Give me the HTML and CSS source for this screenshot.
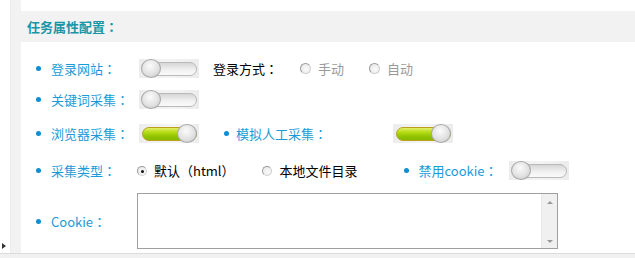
FILE: index.html
```html
<!DOCTYPE html>
<html>
<head>
<meta charset="utf-8">
<link rel="stylesheet" href="styles.css">
</head>
<body>
<div class="page">
  <div class="gutter"><span class="arrow"></span></div>
  <div class="frame">
    <div class="content">
      <div class="header">任务属性配置：</div>

      <div class="row row-1">
        <span class="dot"></span><span class="label">登录网站：</span>
        <span class="toggle"><span class="track"></span><span class="knob"></span></span>
        <span class="plain">登录方式：</span>
        <span class="radio-item radio-login"><span class="radio"></span><span class="muted">手动</span></span>
        <span class="radio-item radio-login2"><span class="radio"></span><span class="muted">自动</span></span>
      </div>

      <div class="row row-2">
        <span class="dot"></span><span class="label">关键词采集：</span>
        <span class="toggle"><span class="track"></span><span class="knob"></span></span>
      </div>

      <div class="row row-3">
        <span class="dot"></span><span class="label">浏览器采集：</span>
        <span class="toggle on"><span class="track"></span><span class="knob"></span></span>
        <span class="dot dot-mid"></span><span class="label label-wide">模拟人工采集：</span>
        <span class="toggle on"><span class="track"></span><span class="knob"></span></span>
      </div>

      <div class="row row-4">
        <span class="dot"></span><span class="label">采集类型：</span>
        <span class="radio-item radio-first"><span class="radio checked"></span><span class="plain-text">默认（html）</span></span>
        <span class="radio-item radio-second"><span class="radio"></span><span class="plain-text">本地文件目录</span></span>
        <span class="dot dot-far"></span><span class="label label-cookie">禁用cookie：</span>
        <span class="toggle"><span class="track"></span><span class="knob"></span></span>
      </div>

      <div class="row row-5">
        <span class="dot"></span><span class="label label-text">Cookie：</span>
        <div class="textbox">
          <div class="text-area"></div>
          <div class="vscroll"><span class="up"></span><span class="down"></span></div>
        </div>
      </div>
    </div>
  </div>
</div>
<div class="hscroll"></div>
</body>
</html>
```

FILE: styles.css
```css
html, body {
  margin: 0;
  padding: 0;
  background: #fff;
}
body {
  width: 635px;
  height: 258px;
  overflow: hidden;
  font-family: "Noto Sans CJK TC", "Noto Sans CJK SC", "Noto Sans", sans-serif;
  font-size: 13px;
}
.page {
  display: flex;
  height: 253px;
}
.gutter {
  width: 11px;
  position: relative;
  background: #fff;
  border-right: 1px solid #ececec;
  box-sizing: border-box;
}
.arrow {
  position: absolute;
  left: 2px;
  bottom: 4px;
  width: 0;
  height: 0;
  border-top: 3px solid transparent;
  border-bottom: 3px solid transparent;
  border-left: 4px solid #333;
}
.frame {
  flex: 1;
  background: #f2f2f2;
  padding-left: 10px;
}
.content {
  background: #fff;
  height: 100%;
  padding-top: 11px;
  box-sizing: border-box;
}
.header {
  background: #f2f2f2;
  height: 31px;
  line-height: 31px;
  margin-left: -10px;
  padding-left: 16px;
  color: #1796a6;
  font-weight: bold;
  font-size: 13px;
}
.row {
  display: flex;
  align-items: center;
  height: 19px;
  padding-left: 15px;
  white-space: nowrap;
}
.row-1 { margin-top: 17px; }
.row-2 { margin-top: 12px; }
.row-3 { margin-top: 15px; }
.row-4 { margin-top: 18px; }
.row-5 { margin-top: 13px; height: 56px; }

.dot {
  width: 5px;
  height: 5px;
  border-radius: 50%;
  background: #0b8ed4;
  margin-right: 10px;
  flex: none;
}
.dot-mid { margin-left: 25px; margin-right: 7px; }
.dot-far { margin-left: 46px; }
.label {
  width: 88px;
  color: #1a9ad8;
  flex: none;
}
.label-wide { width: 157px; }
.label-cookie { width: 90px; }
.label-text { width: 87px; }

.toggle {
  width: 60px;
  height: 19px;
  background: linear-gradient(90deg, #ececec, #f4f4f4 50%, #ececec);
  position: relative;
  display: flex;
  align-items: center;
  padding: 0 2px 0 3px;
  box-sizing: border-box;
  flex: none;
}
.track {
  flex: 1;
  height: 14px;
  border-radius: 7px;
  border: 1px solid #b9b9b9;
  box-sizing: border-box;
  background: linear-gradient(#d6d6d6, #f2f2f2 60%, #fafafa);
}
.knob {
  position: absolute;
  top: 0;
  left: 2px;
  width: 20px;
  height: 19px;
  border-radius: 50%;
  border: 1px solid #a8a8a8;
  box-sizing: border-box;
  background: radial-gradient(circle at 45% 35%, #fbfbfb, #e2e2e2 55%, #c4c4c4);
}
.toggle.on .track {
  border-color: #b9a11c;
  background: linear-gradient(#e4ef6a, #b6dc16 35%, #8fc400 70%, #86b800);
}
.toggle.on .knob {
  left: auto;
  right: 2px;
}

.plain {
  color: #000;
  margin-left: 14px;
}
.radio-item {
  display: flex;
  align-items: center;
}
.radio {
  width: 11px;
  height: 11px;
  border-radius: 50%;
  box-sizing: border-box;
  border: 1px solid #9a9a9a;
  border-right-color: #d0d0d0;
  border-bottom-color: #d0d0d0;
  background: radial-gradient(circle at 60% 60%, #fafafa, #e4e4e4);
  margin-right: 7px;
  position: relative;
  flex: none;
}
.radio.checked::after {
  content: "";
  position: absolute;
  left: 3px;
  top: 3px;
  width: 3px;
  height: 3px;
  border-radius: 50%;
  background: #111;
}
.radio-login { margin-left: 22px; }
.radio-login2 { margin-left: 25px; }
.muted { color: #9a9a9a; }
.radio-first { margin-left: -2px; }
.radio-first .radio, .radio-second .radio { width: 10px; height: 10px; }
.radio-second { margin-left: 27px; }
.radio-second .radio { margin-right: 8px; }
.plain-text { color: #000; }

.textbox {
  width: 421px;
  height: 56px;
  border: 1px solid #a0a0a0;
  box-sizing: border-box;
  display: flex;
  margin-left: -1px;
  background: #fff;
}
.text-area { flex: 1; }
.vscroll {
  width: 15px;
  background: #f0f0f0;
  border-left: 1px solid #e8e8e8;
  display: flex;
  flex-direction: column;
  justify-content: space-between;
  align-items: center;
  padding: 7px 0 5px;
}
.up {
  width: 0;
  height: 0;
  border-left: 3px solid transparent;
  border-right: 3px solid transparent;
  border-bottom: 3px solid #9a9a9a;
}
.down {
  width: 0;
  height: 0;
  border-left: 3px solid transparent;
  border-right: 3px solid transparent;
  border-top: 3px solid #9a9a9a;
}
.hscroll {
  height: 5px;
  border-top: 1px solid #dcdcdc;
  background: #f1f1f1;
}
```
